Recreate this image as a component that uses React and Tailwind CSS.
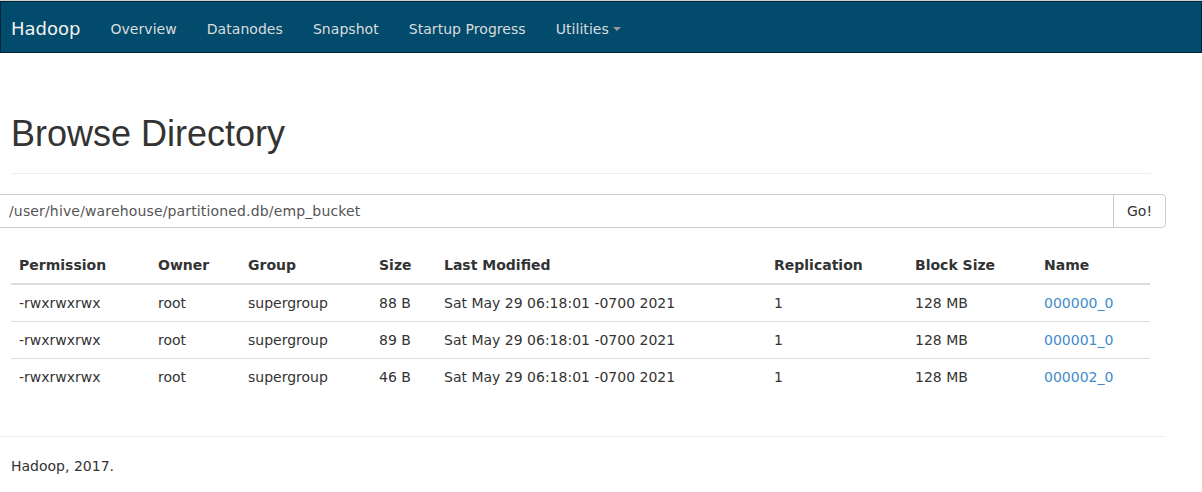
import React from "react";

const cols = [
  { h: "Permission", w: "w-[139px]" },
  { h: "Owner", w: "w-[90px]" },
  { h: "Group", w: "w-[131px]" },
  { h: "Size", w: "w-[65px]" },
  { h: "Last Modified", w: "w-[330px]" },
  { h: "Replication", w: "w-[141px]" },
  { h: "Block Size", w: "w-[129px]" },
  { h: "Name", w: "w-[114px]" },
];

const rows = [
  ["-rwxrwxrwx", "root", "supergroup", "88 B", "Sat May 29 06:18:01 -0700 2021", "1", "128 MB", "000000_0"],
  ["-rwxrwxrwx", "root", "supergroup", "89 B", "Sat May 29 06:18:01 -0700 2021", "1", "128 MB", "000001_0"],
  ["-rwxrwxrwx", "root", "supergroup", "46 B", "Sat May 29 06:18:01 -0700 2021", "1", "128 MB", "000002_0"],
];

export default function App() {
  return (
    <div className="min-h-[492px] w-[1202px] bg-white text-[14px] leading-5 text-[#333]" style={{ fontFamily: '"DejaVu Sans", sans-serif' }}>
      <div className="bg-[#cfcfcf] pt-px">
        <nav className="flex h-[52px] items-center border border-[#01263a] bg-[#034b6d] pt-[4px]">
          <span className="pl-[10px] pr-[15px] text-[18px] leading-5 text-[#f2f2f2]">Hadoop</span>
          {["Overview", "Datanodes", "Snapshot", "Startup Progress"].map((t) => (
            <span key={t} className="px-[15px] tracking-[0.05px] text-[#dcdcdc]">{t}</span>
          ))}
          <span className="flex items-center px-[15px] tracking-[0.05px] text-[#dcdcdc]">
            Utilities
            <span className="ml-[4px] inline-block h-0 w-0 border-x-[4px] border-t-[4px] border-x-transparent border-t-[#9a9a9a]" />
          </span>
        </nav>
      </div>

      <div className="mt-[61px] ml-[11px] w-[1140px] border-b border-[#eee] pb-[9px]">
        <h1 className="mb-[10px] text-[36px] leading-[40px] text-[#333]" style={{ fontFamily: '"Liberation Sans", Arial, sans-serif' }}>
          Browse Directory
        </h1>
      </div>

      <div className="mt-[20px] -ml-[4px] flex h-[34px] w-[1170px]">
        <div className="flex flex-1 items-center rounded-l-[4px] border border-[#ccc] pl-3 text-[14px] tracking-[0.15px] text-[#555]">
          /user/hive/warehouse/partitioned.db/emp_bucket
        </div>
        <div className="-ml-px flex w-[53px] items-center justify-center rounded-r-[4px] border border-[#ccc] bg-white text-[#333]">
          Go!
        </div>
      </div>

      <table className="mt-[19px] ml-[11px] w-[1139px] table-fixed border-collapse">
        <thead>
          <tr>
            {cols.map((c) => (
              <th key={c.h} className={`${c.w} border-b-2 border-[#ddd] px-2 py-2 text-left font-bold leading-5`}>
                {c.h}
              </th>
            ))}
          </tr>
        </thead>
        <tbody>
          {rows.map((r, i) => (
            <tr key={i} className={i > 0 ? "border-t border-[#ddd]" : ""}>
              {r.map((v, j) => (
                <td key={j} className="px-2 py-2 leading-5">
                  {j === 7 ? <span className="text-[#428bca]">{v}</span> : v}
                </td>
              ))}
            </tr>
          ))}
        </tbody>
      </table>

      <div className="mt-[41px] w-[1165px] border-t border-[#eee]" />
      <div className="mt-[19px] ml-[11px] leading-5">Hadoop, 2017.</div>
    </div>
  );
}
